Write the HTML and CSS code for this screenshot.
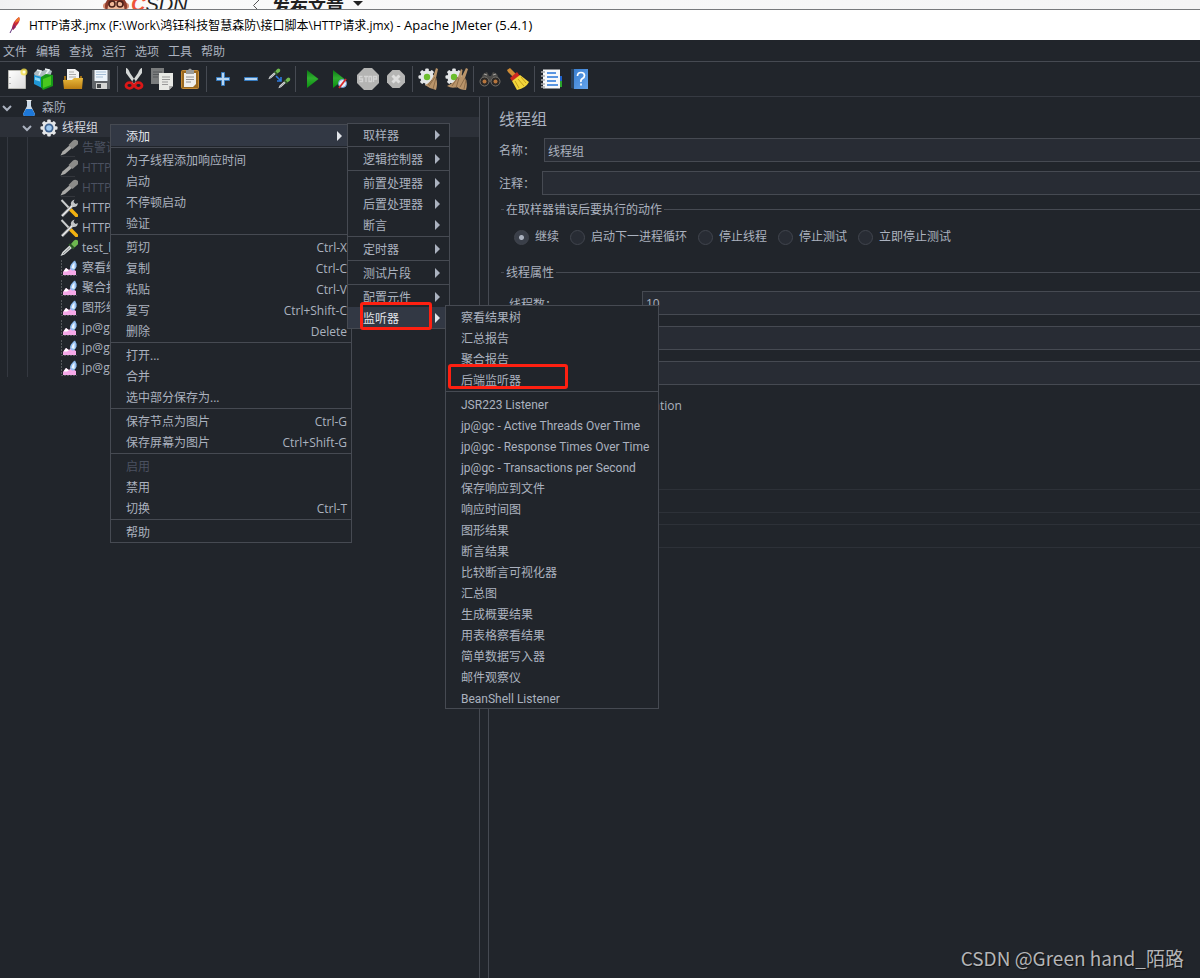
FILE: index.html
```html
<!DOCTYPE html>
<html lang="zh-CN">
<head>
<meta charset="utf-8">
<title>Apache JMeter (5.4.1)</title>
<link rel="stylesheet" href="styles.css">
</head>
<body>
<svg class="defs" aria-hidden="true">
  <defs>
    <linearGradient id="gGreen" x1="0" y1="0" x2="0" y2="1"><stop offset="0" stop-color="#0a7a12"/><stop offset=".45" stop-color="#2fae2f"/><stop offset="1" stop-color="#0a8f10"/></linearGradient>
    <linearGradient id="gFolder" x1="0" y1="0" x2="0" y2="1"><stop offset="0" stop-color="#e9b93c"/><stop offset="1" stop-color="#bb7d12"/></linearGradient>
    <linearGradient id="gBook" x1="0" y1="0" x2="1" y2="1"><stop offset="0" stop-color="#3b7fd0"/><stop offset="1" stop-color="#64a5ee"/></linearGradient>
    <linearGradient id="gPage" x1="0" y1="0" x2="1" y2="1"><stop offset="0" stop-color="#ffffff"/><stop offset="1" stop-color="#dcdcdc"/></linearGradient>
    <g id="gear"><g fill="#e4e6e8"><circle cx="9" cy="9" r="6.6"/><g><rect x="7.2" y="0.5" width="3.6" height="17" rx="1"/><rect x="0.5" y="7.2" width="17" height="3.6" rx="1"/><rect x="7.2" y="0.5" width="3.6" height="17" rx="1" transform="rotate(45 9 9)"/><rect x="7.2" y="0.5" width="3.6" height="17" rx="1" transform="rotate(-45 9 9)"/></g></g></g>
    <g id="pipette-gray"><path d="M.5 16.500 2.500 12.500 10 6l2.500 2.500-7.500 6.500z" fill="#a9a9a7"/><path d="M8.500 6 13 1.500q2-1.500 4.200 0t.5 4L12.500 10z" fill="#8b8b89"/><path d="M1 17.500h14" stroke="#34373d"/></g>
    <g id="pipette-green"><path d="M.5 17 2.500 13 10 6l2.500 2.500-8 7z" fill="#d9dcdc"/><path d="m3 15 7-6.500" stroke="#85898b"/><path d="m8.500 5.500 1.500-1 4.500 4.500-1.500 1.500z" fill="#2c5f25"/><path d="M11 5 14 1.500q2-1.500 3.700 0t.3 3.700L14.500 8.500z" fill="#6db84f"/></g>
    <g id="tools"><path d="M1.500 1 9 9" stroke="#c9cccd" stroke-width="2"/><path d="m10 10 6.500 6.500" stroke="#f2b211" stroke-width="3.500" stroke-linecap="round"/><path d="m2 17 11-11" stroke="#8c8f91" stroke-width="3"/><path d="m2 17 11-11" stroke="#edeeef" stroke-width="1.400"/><path d="M11 6q-1-4 3.500-5.500L13.500 3l2 2 2.300-1q0 4.500-5 4z" fill="#c3c6c8"/></g>
    <g id="chart"><path d="M1.500 1v15.500H17" fill="none" stroke="#55585d" stroke-dasharray="2 1"/><path d="M3 16v-3l3-4 3 2 2-2 5 3v4z" fill="#f5a9e8"/><path d="m3.500 12.500 2.500-3.500 3 2.200-2 1.300z" fill="#fff"/><path d="M10 8Q11 4 15 1.500q2 3 1.500 6Q15 12 12 11.500q-2-.5-2-3.500z" fill="#8fbdf2"/><path d="M11.500 9q0-3 3-5.500V10z" fill="#edf6ff"/></g>
    <path id="doc" d="M0 0h13v12l-3 3H0z"/>
  </defs>
</svg>

<div class="backdrop">
  <svg class="monkey" viewBox="0 0 26 20" aria-hidden="true"><circle cx="3" cy="9" r="3" fill="#d98c6f"/><circle cx="23" cy="9" r="3" fill="#d98c6f"/><ellipse cx="13" cy="9" rx="11" ry="10" fill="#8d3b2b"/><ellipse cx="13" cy="12" rx="8.500" ry="8" fill="#efb899"/><circle cx="9" cy="7" r="3" fill="none" stroke="#4a2119" stroke-width="1.500"/><circle cx="17" cy="7" r="3" fill="none" stroke="#4a2119" stroke-width="1.500"/></svg>
  <span class="brand"><b>C</b>SDN</span>
  <svg class="back" viewBox="0 0 8 12" aria-hidden="true"><path d="M7 0 1.500 5.500 7 11" fill="none" stroke="#555"/></svg>
  <span class="publish">发布文章</span>
  <svg class="caret" viewBox="0 0 10 6" aria-hidden="true"><path d="M0 0h10L5 5z" fill="#222"/></svg>
</div>

<header class="titlebar">
  <svg class="feather" viewBox="0 0 12 18" aria-hidden="true"><path d="M1 17 4 11" stroke="#62317c"/><path d="M3 12Q4 5 10 1q2 3-2 8l-4 5z" fill="#c92a3a"/><path d="M6 7q1-4 4-6 1.500 1.500 0 4z" fill="#ef7a28"/><path d="m3 12 2-4 2 3-3 3z" fill="#8f2463"/></svg>
  <h1>HTTP请求.jmx (F:\Work\鸿钰科技智慧森防\接口脚本\HTTP请求.jmx) <span>- Apache JMeter (5.4.1)</span></h1>
</header>

<nav class="menubar">
  <button>文件</button><button>编辑</button><button>查找</button><button>运行</button><button>选项</button><button>工具</button><button>帮助</button>
</nav>

<div class="toolbar" role="toolbar" aria-label="工具栏">
  <button aria-label="新建"><svg viewBox="0 0 24 24"><path d="M3.500 3.500h17v18h-17z" fill="url(#gPage)" stroke="#b9b9b4"/><path d="M5 10v1m0 5v1" stroke="#888"/><circle cx="19" cy="5" r="3.500" fill="#f4e04b" opacity=".8"/><circle cx="19" cy="5" r="1.500" fill="#fffde0"/></svg></button>
  <button aria-label="模板"><svg viewBox="0 0 24 24"><path d="m1 6 3-3 5 1 6-2 4 2-2 6-14 4z" fill="#aebcc2"/><path d="m4 3 4 1-2 4m6-6 4 1-3 4" stroke="#edf3f5" fill="none" stroke-width="1.500"/><path d="m1 8 8 2v11l-8-4z" fill="#1f97d6"/><path d="m2 10 5 1.500v3L2 13z" fill="#8ed8f5"/><path d="m8 10 5-3 7 1v11l-10 4-2-3z" fill="#179a18"/><path d="m10 12 8-3v9l-8 3z" fill="#49c91f"/></svg></button>
  <button aria-label="打开"><svg viewBox="0 0 24 24"><path d="M6 2h8l4 3v10H6z" fill="#f2f2f2"/><path d="M8 5h5M8 7.500h7M8 10h7" stroke="#aaa"/><path d="M3 9h2v4h13l1-4h2v12H3z" fill="#9c6c15"/><path d="M2 13h9l2-2h9l-1 11H3z" fill="url(#gFolder)"/></svg></button>
  <button aria-label="保存"><svg viewBox="0 0 24 24"><path d="M3 3h18v19H4l-1-1z" fill="#606468"/><path d="M5.500 3h13v11h-13z" fill="#eef5fb"/><path d="M7 5h10M7 7.500h10M7 10h7" stroke="#a6bfd6"/><path d="M7 16h11v6H7z" fill="#d5d5d3"/><path d="M8 17h4v4H8z" fill="#44474a"/></svg></button>
  <i></i>
  <button aria-label="剪切"><svg viewBox="0 0 24 24"><path d="M4 1q2 0 4 5l7 10-2.500 1.500L4 6zM20 1q-2 0-4 5l-7 10 2.500 1.500L20 6z" fill="#d4d7d6"/><g fill="none" stroke="#dc1717" stroke-width="2.800"><ellipse cx="7.500" cy="18.500" rx="3.500" ry="2.800"/><ellipse cx="16.500" cy="18.500" rx="3.500" ry="2.800"/></g></svg></button>
  <button aria-label="复制"><svg viewBox="0 0 24 24"><g transform="translate(1 1)"><path d="M0 0h13v16H0z" fill="#7a7c7d"/><path d="M2 4h9M2 6.500h7M2 9h5" stroke="#56595c"/></g><g transform="translate(9 6)"><path d="M0 0h14v13l-4 4H0z" fill="#e8e9e5"/><path d="M3 4h8M3 6.500h8M3 9h6M3 11.500h6" stroke="#999"/><path d="M10 17v-4h4z" fill="#aaa"/></g></svg></button>
  <button aria-label="粘贴"><svg viewBox="0 0 24 24"><rect x="3.500" y="3.500" width="17" height="18" rx="1" fill="#9b6a21" stroke="#c78d37"/><path d="M6 6h12v11l-3 3H6z" fill="#efefed"/><path d="M8 10h8M8 12.500h8M8 15h5" stroke="#929292"/><path d="M8 3h2q2-3 4 0h2v4H8z" fill="#9a9c9b"/></svg></button>
  <i></i>
  <button aria-label="展开"><svg viewBox="0 0 24 24"><path d="M10.500 5.500h3v5h5v3h-5v5h-3v-5h-5v-3h5z" fill="#b7d5f1" stroke="#367bbf"/></svg></button>
  <button aria-label="折叠"><svg viewBox="0 0 24 24"><path d="M5.500 10.500h13v3h-13z" fill="#b7d5f1" stroke="#367bbf"/></svg></button>
  <button aria-label="切换"><svg viewBox="0 0 24 24"><g transform="translate(1 1) scale(.66)"><use href="#pipette-green"/></g><g transform="translate(11 10) scale(.66)"><use href="#pipette-green"/></g><path d="m9 9 5 5m0-4v4h-4" stroke="#2f79dc" fill="none" stroke-width="1.600"/></svg></button>
  <i></i>
  <button aria-label="启动"><svg viewBox="0 0 24 24"><path d="m7 3 11.500 9L7 21z" fill="url(#gGreen)"/></svg></button>
  <button aria-label="不停顿启动"><svg viewBox="0 0 24 24"><path d="m5 3 11.500 9L5 21z" fill="url(#gGreen)"/><circle cx="14.500" cy="16.500" r="4" fill="#e4edf8" stroke="#6b9bd6"/><path d="m11 21 7-9" stroke="#d92727" stroke-width="1.800"/></svg></button>
  <button aria-label="停止" disabled><svg viewBox="0 0 24 24"><path d="M8 1h8l7 7v8l-7 7H8l-7-7V8z" fill="#b4b4b3"/><g fill="none" stroke="#d4d4d4" stroke-width="1.300"><path d="M6.500 9.500H3.500v2.500h3v2.500h-3M8 9.500h4m-2 0v5.500M13 9.500h2.500v5H13zM17.500 15V9.500h3V12h-3"/></g></svg></button>
  <button aria-label="关闭" disabled><svg viewBox="0 0 24 24"><path d="M8.500 3h7L21 8.500v7L15.500 21h-7L3 15.500v-7z" fill="#b5b5b4"/><path d="m8.500 8.500 7 7m0-7-7 7" stroke="#dedede" stroke-width="3"/></svg></button>
  <i></i>
  <button aria-label="清除"><svg viewBox="0 0 24 24"><g transform="translate(1 1)"><use href="#gear"/><circle cx="9" cy="9" r="3.200" fill="#6bbd2c"/></g><path d="m19 1 2 1-2 9q2 5 0 12-6-1-11-5 5-2 8-8z" fill="#b9946a"/><path d="m18 10-6 9m7-8-3 11m-1-9-4 5" stroke="#8e6d4a"/></svg></button>
  <button aria-label="清除全部"><svg viewBox="0 0 24 24"><g transform="translate(0 1)"><use href="#gear"/><circle cx="9" cy="9" r="3.200" fill="#6bbd2c"/></g><path d="m16 2 1.500 1-1 7 4.500-9 2 1-3 9q3 5 1 12-6 0-9-3-5 2-10-1 7-3 11-9z" fill="#b9946a"/><path d="m13 10-6 9m7-8-3 10m9-10-5 9m6-7-2 9" stroke="#8e6d4a"/></svg></button>
  <i></i>
  <button aria-label="查找"><svg viewBox="0 0 24 24"><path d="m5 7 4-2 2 4h2l2-4 4 2 3 8H2z" fill="#4c4b49"/><path d="m6 7 3 1m9-1-3 1" stroke="#a6a4a0"/><circle cx="6.500" cy="14.500" r="4.500" fill="#2c2927" stroke="#74716c"/><circle cx="17.500" cy="14.500" r="4.500" fill="#2c2927" stroke="#74716c"/><circle cx="6.500" cy="14.500" r="2" fill="#b8763e"/><circle cx="17.500" cy="14.500" r="2" fill="#b8763e"/></svg></button>
  <button aria-label="重置查找"><svg viewBox="0 0 24 24"><path d="m1 3 3-2 6 6-3 3-5-5z" fill="#d08c35"/><path d="m4 11 7-6 3 4-8 5z" fill="#cc2820"/><path d="m6 14 8-6 9 7q-3 6-12 8z" fill="#f3d63a"/><path d="m9 14 4 7m-1-9 6 7m-3-9 5 6" stroke="#c49e1d"/></svg></button>
  <i></i>
  <button aria-label="函数助手"><svg viewBox="0 0 24 24"><path d="M20 9h3v5h-3z" fill="#1f62cc"/><path d="M20 14h3v6h-3z" fill="#29a52d"/><path d="M4 2.500h17v19H4z" fill="#f7f8fa"/><path d="M2 5h4M2 9h4M2 13h4M2 17h4M2 20h4" stroke="#a9abae" stroke-width="1.500"/><path d="M8 6h9M8 10h11M8 14h9M8 18h11" stroke="#2774d8" stroke-width="1.500"/></svg></button>
  <button aria-label="帮助"><svg viewBox="0 0 24 24"><path d="M4 2h3v20l-3-1z" fill="#29425f"/><path d="M7 2h14v20H7z" fill="url(#gBook)"/><path d="M10.500 9q0-3.500 3.500-3.500t3.500 3q0 2-2 3T14 15m0 1.500v2" fill="none" stroke="#fff" stroke-width="1.700"/></svg></button>
</div>

<main class="workspace">
  <section class="tree" aria-label="测试计划">
    <div class="row"><svg class="tog" viewBox="0 0 10 10"><path d="m1 3 4 4 4-4"/></svg><svg class="ico" viewBox="0 0 18 18"><path d="M7 1h4v6l4 8q0 2-2 2H5q-2 0-2-2l4-8z" fill="#ccd9e5"/><path d="m6 10h6l3 5q0 2-2 2H5q-2 0-2-2z" fill="#1e78d8"/><path d="M6.500 1.500h5" stroke="#eee"/></svg><span>森防</span></div>
    <div class="branch">
      <div class="row selected"><svg class="tog" viewBox="0 0 10 10"><path d="m1 3 4 4 4-4"/></svg><svg class="ico" viewBox="0 0 18 18"><use href="#gear"/><circle cx="9" cy="9" r="4.500" fill="#3d618f"/><circle cx="9" cy="9" r="2.800" fill="#9fc8ee"/></svg><span>线程组</span></div>
      <div class="leaves">
        <div class="row off"><svg class="ico" viewBox="0 0 18 18"><use href="#pipette-gray"/></svg><span>告警详情</span></div>
        <div class="row off"><svg class="ico" viewBox="0 0 18 18"><use href="#pipette-gray"/></svg><span>HTTP</span></div>
        <div class="row off"><svg class="ico" viewBox="0 0 18 18"><use href="#pipette-gray"/></svg><span>HTTP</span></div>
        <div class="row"><svg class="ico" viewBox="0 0 18 18"><use href="#tools"/></svg><span>HTTP</span></div>
        <div class="row"><svg class="ico" viewBox="0 0 18 18"><use href="#tools"/></svg><span>HTTP</span></div>
        <div class="row"><svg class="ico" viewBox="0 0 18 18"><use href="#pipette-green"/></svg><span>test_l</span></div>
        <div class="row"><svg class="ico" viewBox="0 0 18 18"><use href="#chart"/></svg><span>察看结</span></div>
        <div class="row"><svg class="ico" viewBox="0 0 18 18"><use href="#chart"/></svg><span>聚合报</span></div>
        <div class="row"><svg class="ico" viewBox="0 0 18 18"><use href="#chart"/></svg><span>图形结</span></div>
        <div class="row"><svg class="ico" viewBox="0 0 18 18"><use href="#chart"/></svg><span>jp@gc</span></div>
        <div class="row"><svg class="ico" viewBox="0 0 18 18"><use href="#chart"/></svg><span>jp@gc</span></div>
        <div class="row"><svg class="ico" viewBox="0 0 18 18"><use href="#chart"/></svg><span>jp@gc</span></div>
      </div>
    </div>
  </section>

  <section class="editor">
    <h2>线程组</h2>
    <div class="field"><label for="name">名称：</label><input id="name" value="线程组"></div>
    <div class="field comment"><label for="comment">注释：</label><input id="comment"></div>
    <fieldset>
      <legend>在取样器错误后要执行的动作</legend>
      <div class="actions">
        <label><input type="radio" name="act" checked>继续</label>
        <label><input type="radio" name="act">启动下一进程循环</label>
        <label><input type="radio" name="act">停止线程</label>
        <label><input type="radio" name="act">停止测试</label>
        <label><input type="radio" name="act">立即停止测试</label>
      </div>
    </fieldset>
    <fieldset>
      <legend>线程属性</legend>
      <div class="props">
        <div class="prop"><label for="threads">线程数：</label><input id="threads" value="10"></div>
        <div class="prop"><input aria-label="Ramp-Up时间"></div>
        <div class="prop"><input aria-label="循环次数"></div>
        <label class="same"><input type="checkbox" checked>Same user on each iteration</label>
        <div class="prop dim first"><input aria-label="持续时间" disabled></div>
        <div class="prop dim"><input aria-label="启动延迟" disabled></div>
      </div>
    </fieldset>
  </section>
</main>

<div class="menu context" role="menu">
  <button class="hot">添加<em></em></button><hr>
  <button>为子线程添加响应时间</button><button>启动</button><button>不停顿启动</button><button>验证</button><hr>
  <button>剪切<kbd>Ctrl-X</kbd></button><button>复制<kbd>Ctrl-C</kbd></button><button>粘贴<kbd>Ctrl-V</kbd></button><button>复写<kbd>Ctrl+Shift-C</kbd></button><button>删除<kbd>Delete</kbd></button><hr>
  <button>打开...</button><button>合并</button><button>选中部分保存为...</button><hr>
  <button>保存节点为图片<kbd>Ctrl-G</kbd></button><button>保存屏幕为图片<kbd>Ctrl+Shift-G</kbd></button><hr>
  <button disabled>启用</button><button>禁用</button><button>切换<kbd>Ctrl-T</kbd></button><hr>
  <button>帮助</button>
</div>

<div class="menu add" role="menu">
  <button>取样器<em></em></button><hr>
  <button>逻辑控制器<em></em></button><hr>
  <button>前置处理器<em></em></button><button>后置处理器<em></em></button><button>断言<em></em></button><hr>
  <button>定时器<em></em></button><hr>
  <button>测试片段<em></em></button><hr>
  <button>配置元件<em></em></button><button class="hot">监听器<em></em></button>
</div>

<div class="menu listeners" role="menu">
  <button>察看结果树</button><button>汇总报告</button><button>聚合报告</button><button>后端监听器</button><hr>
  <button>JSR223 Listener</button><button>jp@gc - Active Threads Over Time</button><button>jp@gc - Response Times Over Time</button><button>jp@gc - Transactions per Second</button><button>保存响应到文件</button><button>响应时间图</button><button>图形结果</button><button>断言结果</button><button>比较断言可视化器</button><button>汇总图</button><button>生成概要结果</button><button>用表格察看结果</button><button>简单数据写入器</button><button>邮件观察仪</button><button>BeanShell Listener</button>
</div>

<div class="mark mark-menu"></div>
<div class="mark mark-item"></div>
<div class="watermark">CSDN @Green hand_陌路</div>
</body>
</html>
```
FILE: styles.css
```css
:root {
  --bg: #21252b;
  --text: #abb2bf;
  --line: #464a52;
  --field: #282c34;
  --hot: #323844;
}
* { box-sizing: border-box; }
body {
  margin: 0;
  min-height: 100vh;
  display: flex;
  flex-direction: column;
  position: relative;
  overflow: hidden;
  background: var(--bg);
  color: var(--text);
  font: 12px/20px "Open Sans", "Noto Sans CJK SC", sans-serif;
}
button, input { font: inherit; color: inherit; }
button { border: 0; padding: 0; background: none; text-align: left; }
.defs { position: absolute; width: 0; height: 0; }

.backdrop {
  height: 10px;
  display: flex;
  align-items: flex-end;
  overflow: hidden;
  padding-left: 103px;
  background: linear-gradient(90deg, #f1f1f2, #fafafa 100px, #f4f4f5);
  border-bottom: 1px solid #77797c;
  color: #222;
}
.monkey { width: 26px; height: 20px; flex: none; margin-bottom: -8px; }
.brand { width: 57px; font: italic 20px/20px "Liberation Sans", sans-serif; margin: 0 0 -5px 2px; }
.brand b { color: #f0543a; }
.back { width: 8px; height: 12px; margin: 0 12px -3px 64px; flex: none; }
.publish { font: bold 18px/20px "Noto Sans CJK SC", sans-serif; margin-bottom: -7px; }
.caret { width: 10px; height: 6px; margin: 0 0 2px 9px; }

.titlebar {
  height: 30px;
  display: flex;
  align-items: center;
  gap: 8px;
  padding-left: 9px;
  background: #fff;
  color: #000;
}
.titlebar h1 { margin: 0; font-size: 12px; font-weight: 400; }
.titlebar span { font-size: 13px; }
.feather { width: 12px; height: 18px; }

.menubar {
  height: 22px;
  display: flex;
  gap: 9px;
  padding: 2px 0 0 3px;
  border-bottom: 1px solid var(--line);
}
.toolbar {
  height: 35px;
  display: flex;
  align-items: center;
  padding-left: 3px;
  border-bottom: 1px solid #363a42;
}
.toolbar button { width: 28px; height: 28px; display: grid; place-items: center; }
.toolbar svg { width: 24px; height: 24px; }
.toolbar i { width: 1px; height: 26px; margin: 0 2px; background: var(--line); }

.workspace { flex: 1; display: grid; grid-template-columns: 480px 1fr; gap: 8px; }
.tree { border-right: 1px solid var(--line); }
.row { height: 20px; display: flex; align-items: center; white-space: nowrap; padding: 2px 0 0 2px; }
.row .tog { width: 10px; height: 10px; margin-right: 8px; fill: none; stroke: var(--text); stroke-width: 2; }
.row .ico { width: 18px; height: 18px; margin-right: 4px; }
.branch { background: linear-gradient(#343840, #343840) 7px 0 / 1px 100% no-repeat; }
.row.selected { padding-left: 22px; background: #2c3038; color: #d7dae0; }
.leaves { padding-left: 58px; background: linear-gradient(#343840, #343840) 27px 0 / 1px 100% no-repeat; }
.off { color: #4b5160; }

.editor { border-left: 1px solid var(--line); padding: 10px 0 0 10px; overflow: hidden; }
.editor h2 { margin: 0 0 7px; font-size: 16px; line-height: 24px; font-weight: 400; }
.field { display: flex; align-items: center; gap: 9px; margin-bottom: 9px; }
.field label { width: 36px; padding-top: 2px; }
.field.comment { gap: 7px; margin-bottom: 4px; }
.field input, .prop input {
  flex: 1;
  min-width: 0;
  height: 24px;
  padding: 2px 3px 0;
  border: 1px solid var(--line);
  border-right: 0;
  background: var(--field);
}
.prop input { padding: 0 3px; }
fieldset {
  margin: 0 0 0 2px;
  padding: 0;
  border: 0 solid var(--line);
  border-top-width: 1px;
}
legend { margin-left: 3px; padding: 1px 2px 0; }
.actions { display: flex; gap: 11px; padding: 7px 0 15px 13px; }
.actions label { display: flex; align-items: center; gap: 6px; }
input[type="radio"] {
  appearance: none;
  width: 15px;
  height: 15px;
  margin: 0;
  border: 1px solid #41454e;
  border-radius: 50%;
  background: var(--field);
}
input[type="radio"]:checked { background: radial-gradient(circle, var(--text) 2px, #3a3f49 3px); }
.props { padding-top: 8px; }
.prop { display: grid; grid-template-columns: 133px 1fr; align-items: end; padding-left: 8px; margin-bottom: 11px; }
.prop input { grid-column: 2; }
.same { display: flex; align-items: center; gap: 3px; padding-left: 8px; }
.same input { margin: 0; }
.prop.first { margin-top: 73px; }
.dim input { background: none; border-color: #2d3138; }

.menu {
  position: absolute;
  display: flex;
  flex-direction: column;
  background: var(--bg);
  border: 1px solid var(--line);
}
.menu button {
  height: 21px;
  display: flex;
  align-items: center;
  justify-content: space-between;
  padding: 2px 4px 0 15px;
  white-space: nowrap;
}
.menu hr { width: 100%; height: 1px; margin: 1px 0; border: 0; background: var(--line); }
.menu button:disabled { color: #4b5160; }
.menu .hot { background: var(--hot); color: #e3e6eb; }
.menu kbd { font: inherit; }
.menu em { border: 5px solid transparent; border-left-color: currentColor; border-right: 0; margin: 0 5px 2px 0; }
.context { left: 110px; top: 124px; width: 242px; }
.add { left: 347px; top: 123px; width: 103px; }
.listeners { left: 445px; top: 305px; width: 214px; font-family: Roboto, "Noto Sans CJK SC", sans-serif; }
.mark { position: absolute; border: 3px solid #fe2011; border-radius: 3px; }
.mark-menu { left: 360px; top: 302px; width: 72px; height: 28px; }
.mark-item { left: 448px; top: 364px; width: 120px; height: 25px; }
.watermark {
  position: absolute;
  right: 16px;
  bottom: 6px;
  font: 19px/28px "Noto Sans CJK SC", sans-serif;
  color: #b4b5b7;
  text-shadow: 1px 1px 1px #111;
}
```
